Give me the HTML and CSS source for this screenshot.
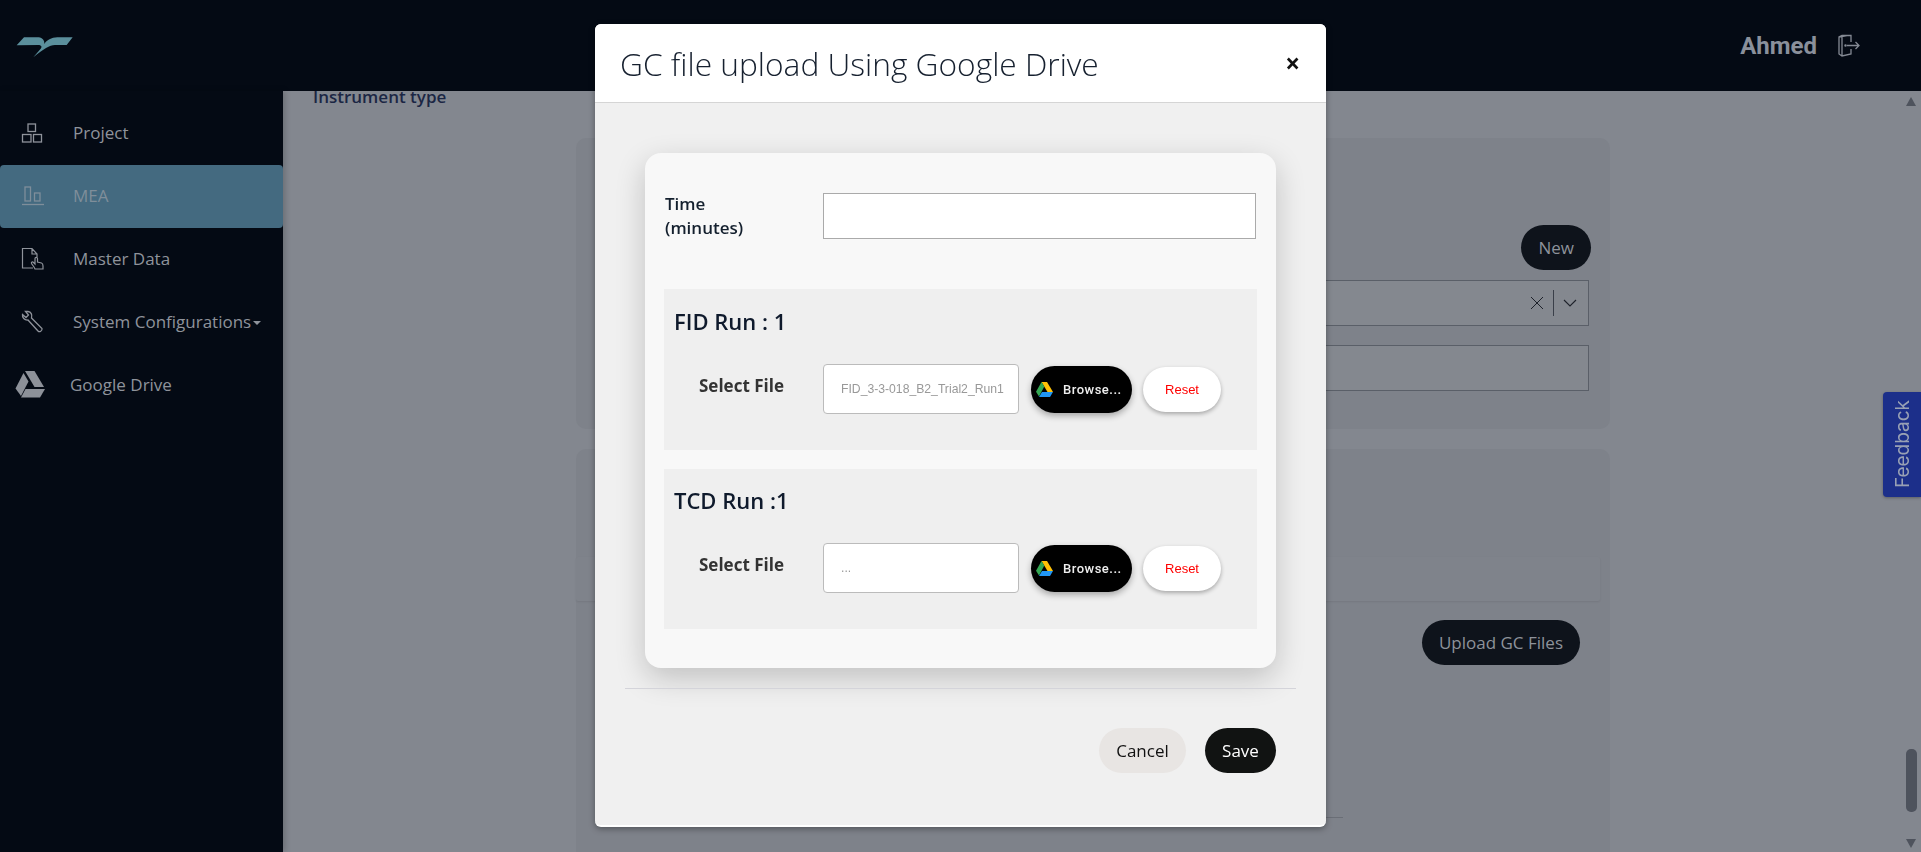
FILE: index.html
```html
<!DOCTYPE html>
<html>
<head>
  <meta charset="UTF-8">
  <title>GC file upload</title>
  <link rel="stylesheet" href="styles.css">
</head>
<body>
<div class="app">
  <header class="topbar">
    <svg class="logo" width="58" height="22" viewBox="48 108 174 66"><path d="M50 136 72 112H116C128 113 134 122 133 132 140 120 154 113 172 112H218L200 135H165C148 136 132 146 100 172L122 146C127 140 124 135 114 135Z"/></svg>
    <div class="user">
      <span class="user-name">Ahmed</span>
      <svg width="23" height="23" viewBox="0 0 23 23" fill="none" stroke="#858a94" stroke-width="1.300"><path d="M13 8V1.500H4L1 3V20L4 22 13 20V15M1 3 9 1.500M4 22V3"/><path d="M9 11.500H21M17.500 8 21 11.500 17.500 15"/><circle cx="7.500" cy="11.500" r=".6"/></svg>
    </div>
  </header>

  <nav class="sidebar">
    <a class="nav-item">
      <span class="nav-icon"><svg width="22" height="22" viewBox="0 0 22 22" fill="none" stroke="currentColor" stroke-width="1.300"><rect x="7" y="2" width="7.500" height="7.500"/><rect x="1.500" y="12.500" width="8.500" height="7.500"/><rect x="12.500" y="12.500" width="8" height="7.500"/></svg></span>
      Project
    </a>
    <a class="nav-item active">
      <span class="nav-icon"><svg width="24" height="22" viewBox="0 0 24 22" fill="none" stroke="currentColor" stroke-width="1.300"><path d="M1 19.500H23"/><rect x="4" y="2" width="5.500" height="14"/><rect x="13.500" y="8" width="5.500" height="8"/></svg></span>
      MEA
    </a>
    <a class="nav-item">
      <span class="nav-icon"><svg width="24" height="24" viewBox="0 0 24 24" fill="none" stroke="currentColor" stroke-width="1.200"><path d="M12 21H1.500V1.500H11L16 7V10M11 1.500V7H16"/><path d="M13 20 10.500 16.500C10 15 11.500 14.500 12.500 15.500L14 17V11.500C14 10 16.500 10 16.500 11.500V15L20.500 16C22 16.500 22 17.500 22 19V22H14Z"/></svg></span>
      Master Data
    </a>
    <a class="nav-item">
      <span class="nav-icon"><svg width="24" height="24" viewBox="0 0 24 24" fill="none" stroke="currentColor" stroke-width="1.300"><path d="M7 1.500 4.500 1.500 7.500 5 5 7.500 1.500 4.500C1 7.500 3.500 10.500 7 10L17 21C18.500 22.500 21.500 21 21 18.500L10.500 8C11.500 4.500 10 2 7 1.500Z"/></svg></span>
      <span class="caret-label">System Configurations</span>
    </a>
    <a class="nav-item drive">
      <span class="nav-icon"><svg width="30" height="27" viewBox="0 0 30 27" fill="#8d9199"><path d="M10 0H19.500L29 16H19.500Z"/><path d="M8.500 2 13.500 10.500 6 25 .5 17.500Z"/><path d="M10.500 18H30L25 26.500H6Z"/></svg></span>
      Google Drive
    </a>
  </nav>

  <main class="content">
    <p class="field-title">Instrument type</p>
    <section class="panel panel-top">
      <div class="panel-action"><button class="pill">New</button></div>
      <div class="select-box">
        <svg width="14" height="14" viewBox="0 0 14 14" stroke="#1e222b" stroke-width="1"><path d="M1 1 13 13M13 1 1 13"/></svg>
        <span class="select-sep"></span>
        <svg width="14" height="8" viewBox="0 0 14 8" fill="none" stroke="#1e222b" stroke-width="1.100"><path d="M1 1 7 7 13 1"/></svg>
      </div>
      <div class="plain-box"></div>
    </section>
    <section class="panel panel-bottom">
      <div class="panel-row"></div>
      <div class="panel-action upload"><button class="pill">Upload GC Files</button></div>
      <div class="panel-line"></div>
    </section>
  </main>
</div>

<div class="feedback"><span>Feedback</span></div>
<div class="scrollbar">
  <span class="arrow-up"></span>
  <span class="thumb"></span>
  <span class="arrow-down"></span>
</div>

<div class="modal-wrap">
  <div class="modal">
    <div class="modal-header">
      <h2>GC file upload Using Google Drive</h2>
      <span class="modal-close">×</span>
    </div>
    <div class="modal-body">
      <div class="modal-card">
        <div class="time-row">
          <label>Time<br>(minutes)</label>
          <input type="text" class="time-input">
        </div>

        <div class="run">
          <h3>FID Run : 1</h3>
          <div class="file-row">
            <label>Select File</label>
            <input type="text" class="file-input" value="FID_3-3-018_B2_Trial2_Run1" readonly>
            <button class="browse"><svg width="17" height="15" viewBox="0 0 17 15"><path fill="#ffc107" d="M5.500 0H11L17 10H11.500Z"/><path fill="#34a853" d="M5.500 0 8.300 4.600 3 14.500 0 9.800Z"/><path fill="#2196f3" d="M6 10H17L14 15H3Z"/></svg>Browse...</button>
            <button class="reset">Reset</button>
          </div>
        </div>

        <div class="run run-second">
          <h3>TCD Run :1</h3>
          <div class="file-row">
            <label>Select File</label>
            <input type="text" class="file-input" value="..." readonly>
            <button class="browse"><svg width="17" height="15" viewBox="0 0 17 15"><path fill="#ffc107" d="M5.500 0H11L17 10H11.500Z"/><path fill="#34a853" d="M5.500 0 8.300 4.600 3 14.500 0 9.800Z"/><path fill="#2196f3" d="M6 10H17L14 15H3Z"/></svg>Browse...</button>
            <button class="reset">Reset</button>
          </div>
        </div>
      </div>

      <div class="modal-footer">
        <button class="btn-cancel">Cancel</button>
        <button class="btn-save">Save</button>
      </div>
    </div>
  </div>
</div>
</body>
</html>
```

FILE: styles.css
```css
* { box-sizing: border-box; }
html, body { margin: 0; height: 100%; overflow: hidden; }
body { font-family: "Open Sans", "Noto Sans", sans-serif; font-size: 17px; background: #83878f; }
button { font-family: inherit; border: 0; cursor: pointer; }

.app { display: grid; grid-template-columns: 283px 1fr; grid-template-rows: 91px 1fr; height: 852px; }

.topbar { grid-column: 1 / 3; background: #040a14; display: flex; align-items: center; justify-content: space-between; padding: 0 60px 0 16px; z-index: 1; }
.logo { fill: #5b8f9c; margin-top: 3px; }
.user { display: flex; align-items: center; gap: 21px; }
.user-name { font-family: Roboto, sans-serif; font-weight: 700; font-size: 24px; color: #8a909b; }

.sidebar { background: #040a14; padding-top: 11px; box-shadow: 2px 0 6px rgba(0, 0, 0, .2); z-index: 1; }
.nav-item { display: flex; align-items: center; height: 63px; padding: 0 0 2px 21px; color: #8f939b; font-size: 17px; }
.nav-item.active { background: #446a80; color: #7f8e9a; border-radius: 4px; }
.nav-icon { width: 52px; display: flex; }
.caret-label::after { content: ""; display: inline-block; margin-left: 2px; vertical-align: 3px; border: 4px solid transparent; border-top-color: #8f939b; border-bottom: 0; }
.nav-item.drive { padding-left: 15px; }
.nav-item.drive .nav-icon { width: 55px; }

.content { overflow: hidden; padding-left: 30px; }
.field-title { margin: -5px 0 0; line-height: 22px; font-weight: 600; color: #1b2644; }
.panel { background: #7e828a; border-radius: 10px; margin-left: 263px; width: 1034px; }
.panel-top { height: 291px; margin-top: 30px; padding: 87px 21px 0 0; }
.panel-bottom { height: 500px; margin-top: 20px; padding: 108px 10px 0 0; }
.panel-action { display: flex; justify-content: flex-end; margin-right: -2px; }
.panel-action.upload { margin: 19px 20px 0 0; }
.pill { height: 45px; border-radius: 23px; background: #0e131b; color: #8d929a; font-size: 17px; padding: 0 17px; }
.select-box { height: 46px; margin: 10px 0 0 249px; background: #84888f; border: 1px solid #5a5f68; display: flex; align-items: center; justify-content: flex-end; padding-right: 11px; }
.select-sep { width: 1px; height: 26px; background: #3a3f49; margin: 0 9px; }
.plain-box { height: 46px; margin: 19px 0 0 249px; background: #84888f; border: 1px solid #5a5f68; }
.panel-row { height: 44px; background: #7f838b; border-radius: 2px; box-shadow: 0 1px 2px rgba(0, 0, 0, .08); }
.panel-line { height: 1px; margin: 152px 257px 0 249px; background: #6a6e76; }

.feedback { position: fixed; top: 392px; right: 0; width: 38px; height: 105px; background: #1c2f8a; border-radius: 4px 0 0 4px; display: flex; align-items: center; justify-content: center; box-shadow: 0 1px 3px rgba(0, 0, 0, .3); }
.feedback span { writing-mode: vertical-rl; transform: rotate(180deg); font-family: Inter, sans-serif; font-size: 19px; color: #98a0b4; }

.scrollbar { position: fixed; top: 97px; right: 4px; width: 11px; height: 751px; }
.thumb { position: absolute; top: 652px; left: 0; width: 11px; height: 63px; border-radius: 5px; background: #4e535d; }
.arrow-up, .arrow-down { position: absolute; left: 0; border-left: 5.500px solid transparent; border-right: 5.500px solid transparent; }
.arrow-up { top: 0; border-bottom: 9px solid #4e535d; }
.arrow-down { bottom: 0; border-top: 9px solid #4e535d; }

.modal-wrap { position: fixed; top: 0; left: 0; right: 0; bottom: 0; display: flex; justify-content: center; padding-top: 24px; z-index: 2; }
.modal { width: 731px; height: 803px; background: #f0f0f0; border-radius: 6px; overflow: hidden; border-bottom: 2px solid #fff; box-shadow: 0 2px 6px rgba(0, 0, 0, .35); }
.modal-header { height: 79px; background: #fff; border-bottom: 1px solid #d5d5d5; display: flex; align-items: center; justify-content: space-between; padding: 0 26px 0 25px; }
.modal-header h2 { margin: 0; font-weight: 300; font-size: 31.700px; color: #16202f; }
.modal-close { font-size: 26px; font-weight: 700; color: #111; }
.modal-body { padding: 50px 30px 0; }
.modal-card { width: 631px; margin-left: 20px; height: 515px; background: #f8f8f8; border-radius: 16px; padding: 40px 19px 0; box-shadow: 0 10px 30px rgba(0, 0, 0, .2); }

.time-row { display: flex; align-items: flex-start; height: 96px; }
.time-row label { width: 159px; padding-left: 1px; margin-top: -1px; font-weight: 600; line-height: 24px; color: #14202e; }
.time-input { width: 433px; height: 46px; background: #fff; border: 1px solid #aaa; outline: 0; }

.run { height: 161px; background: #efefef; padding: 13px 0 0 10px; }
.run-second { height: 160px; margin-top: 19px; padding-top: 12px; }
.run h3 { margin: 0; font-weight: 600; font-size: 22px; line-height: 38px; color: #0f1a2c; }
.file-row { display: flex; align-items: center; margin-top: 24px; }
.file-row label { width: 149px; padding-left: 25px; margin-top: -8px; font-weight: 700; color: #333; }
.file-input { width: 196px; height: 50px; padding-left: 17px; background: #fff; border: 1px solid #bbb; border-radius: 4px; font-family: "Liberation Sans", sans-serif; font-size: 12.200px; color: #999; outline: 0; }
.browse { width: 101px; height: 47px; margin-left: 12px; display: flex; align-items: center; gap: 10px; padding: 0 0 0 5px; border-radius: 24px; background: #000; color: #eee; font-family: Roboto, sans-serif; font-weight: 500; font-size: 13px; letter-spacing: .5px; white-space: nowrap; box-shadow: 0 3px 6px rgba(0, 0, 0, .3); }
.reset { width: 78px; height: 45px; margin-left: 11px; border-radius: 23px; background: #fff; color: #f00; font-family: "Liberation Sans", sans-serif; font-size: 13px; box-shadow: 0 2px 4px rgba(0, 0, 0, .3); }

.modal-footer { margin-top: 20px; padding-top: 39px; border-top: 1px solid #d4d4da; display: flex; justify-content: flex-end; gap: 19px; padding-right: 20px; }
.btn-cancel, .btn-save { height: 45px; border-radius: 23px; font-size: 17px; }
.btn-cancel { width: 87px; background: #e8e5e3; color: #111; }
.btn-save { width: 71px; background: #111312; color: #fff; }
```
